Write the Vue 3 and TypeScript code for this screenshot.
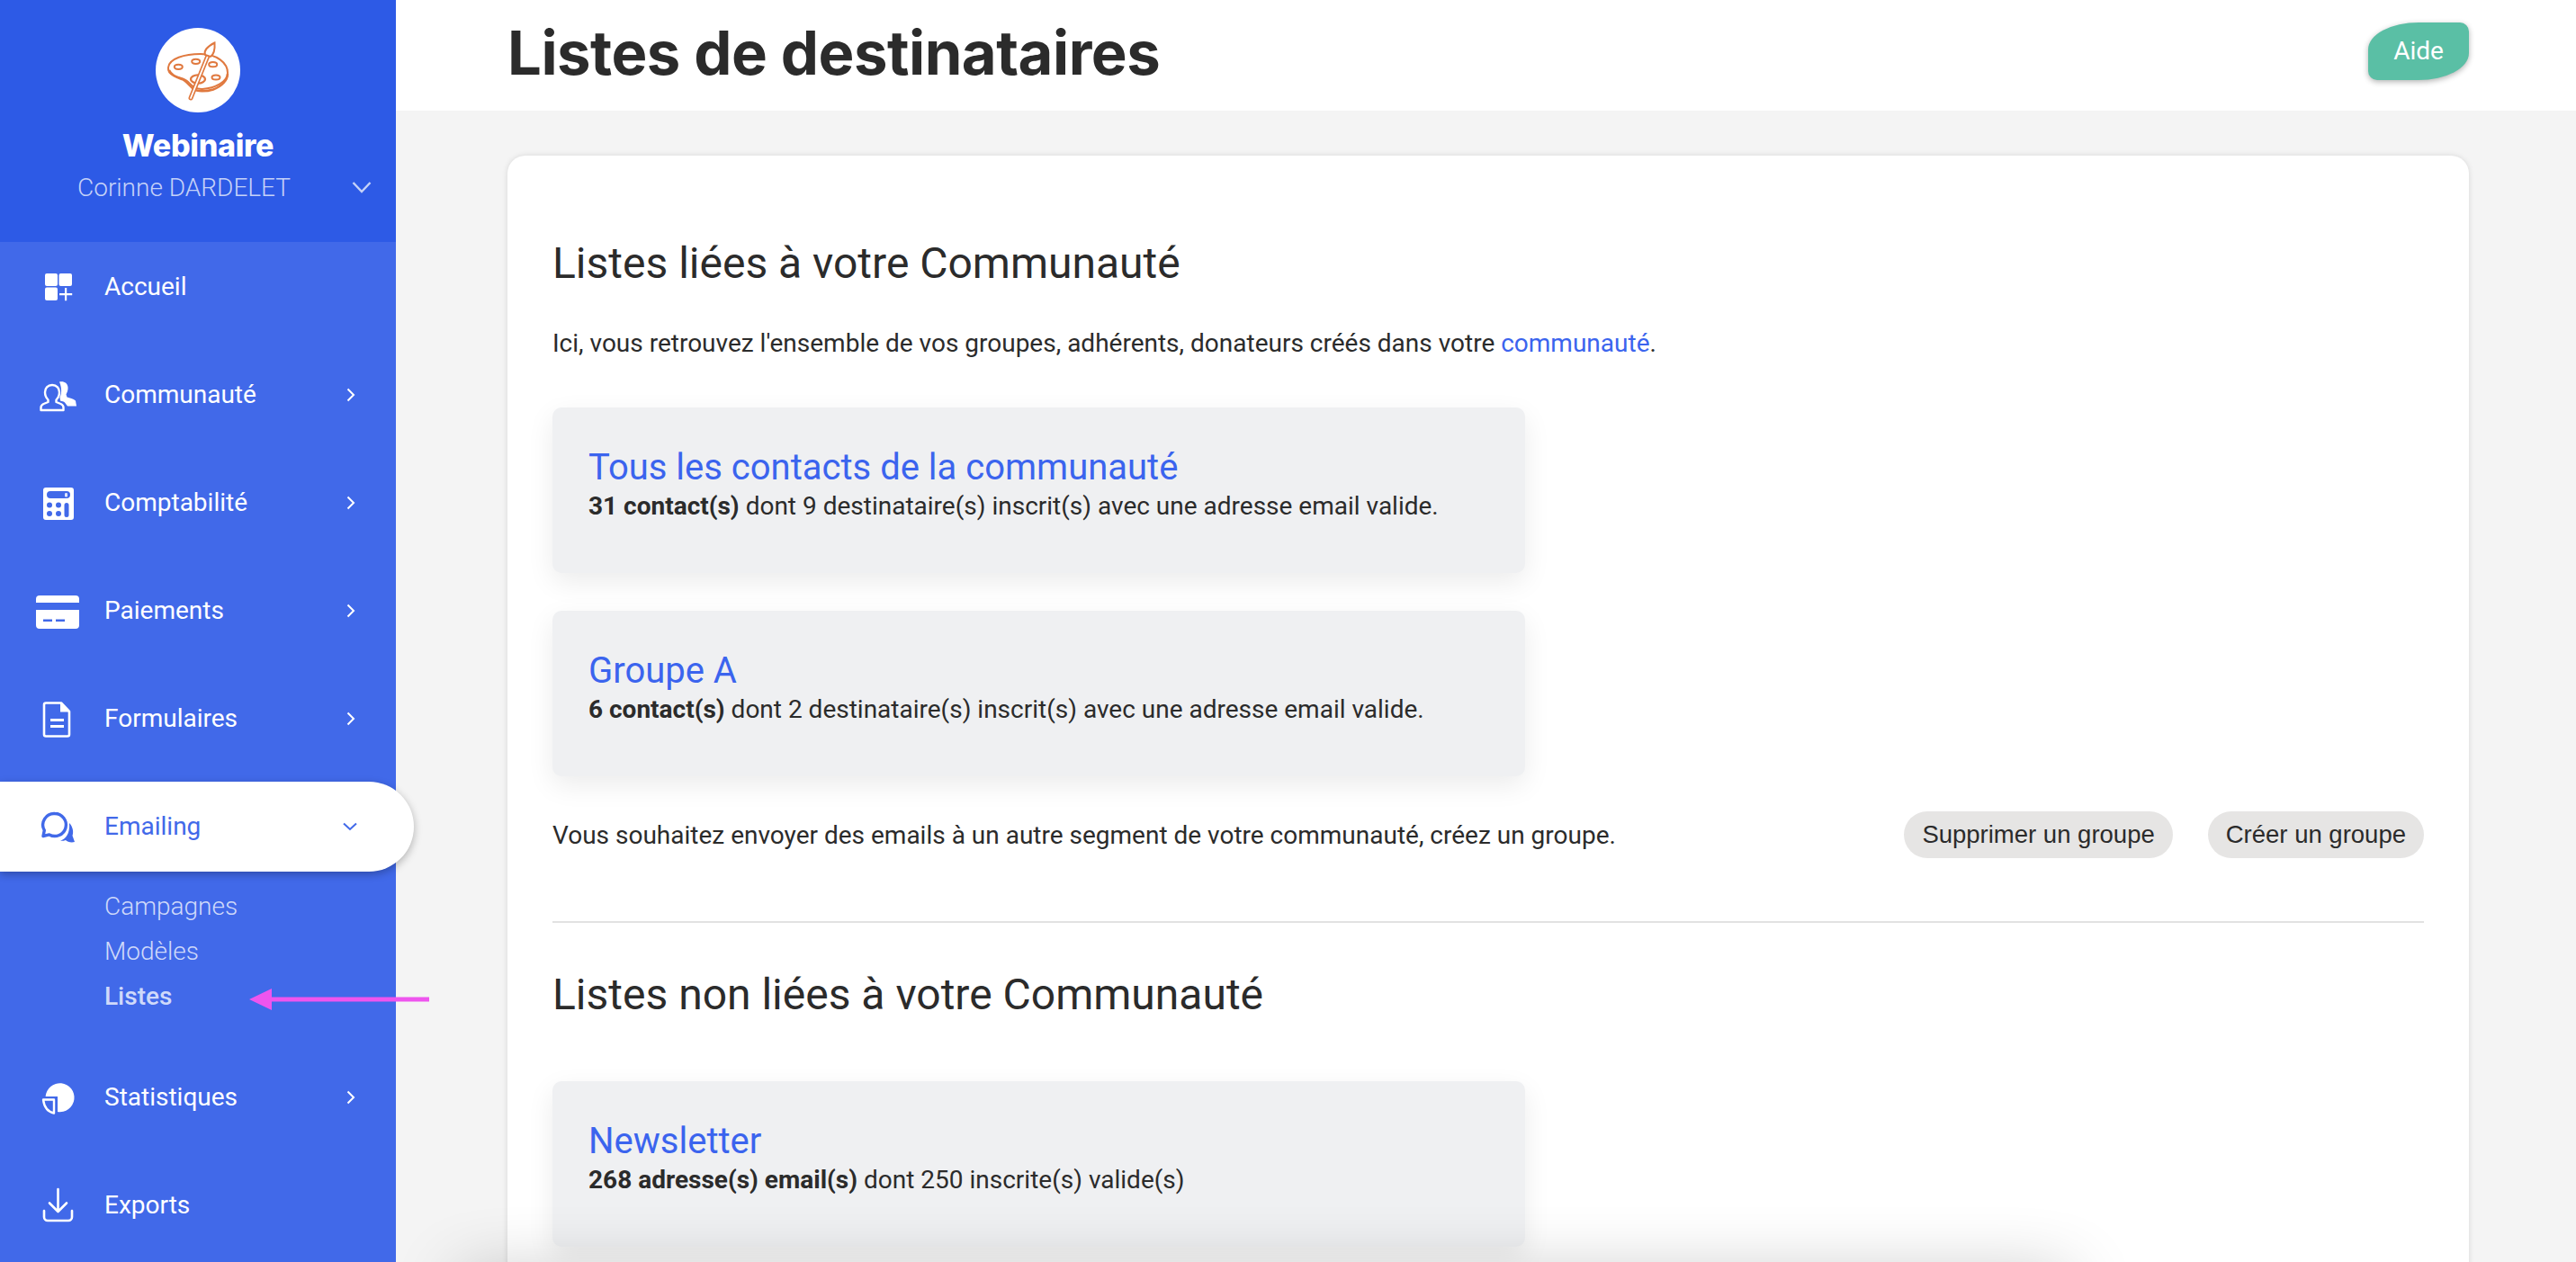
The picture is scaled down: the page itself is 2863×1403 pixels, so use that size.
<script setup lang="ts">
interface NavItem {
  label: string
  icon: string
  more?: boolean
  active?: boolean
}
interface ListCard {
  title: string
  strong: string
  rest: string
}
const items: NavItem[] = [
  { label: 'Accueil', icon: 'home' },
  { label: 'Communauté', icon: 'people', more: true },
  { label: 'Comptabilité', icon: 'calc', more: true },
  { label: 'Paiements', icon: 'card', more: true },
  { label: 'Formulaires', icon: 'doc', more: true },
  { label: 'Emailing', icon: 'chat', active: true },
  { label: 'Statistiques', icon: 'pie', more: true },
  { label: 'Exports', icon: 'export' },
]
const subItems: string[] = ['Campagnes', 'Modèles', 'Listes']
const linked: ListCard[] = [
  { title: 'Tous les contacts de la communauté', strong: '31 contact(s)', rest: ' dont 9 destinataire(s) inscrit(s) avec une adresse email valide.' },
  { title: 'Groupe A', strong: '6 contact(s)', rest: ' dont 2 destinataire(s) inscrit(s) avec une adresse email valide.' },
]
</script>

<template>
  <div class="page">
    <aside class="sidebar">
      <div class="brand">
        <div class="logo">
          <svg width="94" height="94" viewBox="0 0 94 94" fill="none" stroke="#e0793f" stroke-width="2">
            <path d="M14 44C15 34 32 29 50 29C68 29 80 39 80 50C80 60 66 67 52 68C44 68.500 40 64 36 60C32 56 26 56 20 53C16 51 13.500 48 14 44Z" />
            <path d="M15 47C17 52 23 55 29 57C34 59 37 64 42 68C46 71 56 71 64 68.500C74 65 80 58 80 51" stroke-width="2.400" />
            <ellipse cx="25.300" cy="43.300" rx="4.500" ry="2.600" />
            <ellipse cx="44.700" cy="37.300" rx="4.500" ry="2.600" />
            <ellipse cx="63.700" cy="40.700" rx="4.500" ry="2.600" />
            <ellipse cx="67" cy="55" rx="4.500" ry="2.600" />
            <ellipse cx="47" cy="57" rx="8" ry="4.600" stroke-width="2.400" />
            <line x1="39" y1="78" x2="58" y2="31" stroke-width="5" stroke-linecap="round" />
            <line x1="39" y1="78" x2="58" y2="31" stroke="#fff" stroke-width="1.800" stroke-linecap="round" />
            <path d="M55 30C53.500 26 57 21 65.500 16.500C66 23 65 29 61 32Z" fill="#fff" />
          </svg>
        </div>
        <div class="brand-name">Webinaire</div>
        <div class="brand-user">
          <span>Corinne DARDELET</span>
          <svg class="user-chev" width="22" height="14" viewBox="0 0 22 14" fill="none" stroke="#c5d2f8" stroke-width="2.400">
            <path d="M1.500 2L11 12L20.500 2" />
          </svg>
        </div>
      </div>
      <nav class="menu">
        <template v-for="item in items" :key="item.label">
          <a class="item" :class="{ active: item.active }">
            <svg class="icon" width="48" height="44" viewBox="0 0 48 44">
              <g v-if="item.icon === 'home'" fill="#fff">
                <rect x="10" y="7" width="14" height="14" rx="2" />
                <rect x="25.500" y="7" width="14.500" height="14" rx="2" />
                <rect x="10" y="22.500" width="14" height="14.500" rx="2" />
                <path d="M26 29h6V23h2.200v6h6v2.200h-6v6H32v-6h-6z" />
              </g>
              <g v-else-if="item.icon === 'people'">
                <path d="M26 7.500c5-1 9 1 9.500 6 .3 3-1 6-2 8l1 3c3 1 7 1.500 9.500 4l1 6H35l-3-4c-1-1-3-1.500-5-2l-.5-4c2-3 2.500-10-.5-17z" fill="#fff" />
                <path d="M18 11c-5 0-8 3.500-8 8 0 4 1.500 6.500 3.500 8.500v2.500l-5 2c-2 1-3 2-3 4v3h25v-3c0-2-1-3-3-4l-5-2v-2.500c2-2 3.500-4.500 3.500-8.500 0-4.500-3-8-8-8z" fill="#4169e9" stroke="#fff" stroke-width="2.400" stroke-linejoin="round" />
              </g>
              <g v-else-if="item.icon === 'calc'">
                <path fill="#fff" fill-rule="evenodd" d="M11 5h28a3 3 0 0 1 3 3v30a3 3 0 0 1-3 3H11a3 3 0 0 1-3-3V8a3 3 0 0 1 3-3zM16 9a4 4 0 0 0 0 8h18a4 4 0 0 0 0-8zM34 22a2.500 2.500 0 0 0-2.500 2.500v11a2.500 2.500 0 0 0 5 0v-11A2.500 2.500 0 0 0 34 22z" />
                <g fill="#4169e9">
                  <circle cx="15" cy="24.500" r="3" />
                  <circle cx="25" cy="24.500" r="3" />
                  <circle cx="15" cy="34" r="3" />
                  <circle cx="25" cy="34" r="3" />
                </g>
                <rect x="32" y="11" width="3" height="4.500" rx="1.200" fill="#dfe6fc" />
              </g>
              <g v-else-if="item.icon === 'card'" fill="#fff">
                <path d="M4 5h40a4 4 0 0 1 4 4v4H0V9a4 4 0 0 1 4-4z" />
                <path fill-rule="evenodd" d="M0 21h48v17a4 4 0 0 1-4 4H4a4 4 0 0 1-4-4zM8 31.500V34h10v-2.500zM22 31.500V34h10v-2.500z" />
              </g>
              <g v-else-if="item.icon === 'doc'">
                <path d="M11 4.500H28L37 14V39.500a2 2 0 0 1-2 2H11a2 2 0 0 1-2-2V6.500a2 2 0 0 1 2-2z" fill="none" stroke="#fff" stroke-width="2.600" stroke-linejoin="round" />
                <path d="M27 4.500L37.500 14.500H27z" fill="#fff" />
                <path d="M16 23.500H31M16 30.500H31" stroke="#fff" stroke-width="3" fill="none" />
              </g>
              <g v-else-if="item.icon === 'chat'">
                <path d="M21 7.500a12.500 12.500 0 1 1-6.200 23.400L8 32.500l1.300-6.400A12.500 12.500 0 0 1 21 7.500z" fill="none" stroke="#4169e9" stroke-width="3.400" stroke-linejoin="round" />
                <path d="M37 18c4 4 5 10 3.500 14l2.500 7c-4 1-8 0-10-2-2 .8-4 1-6 .8 6-2 11-8 10-19.800z" fill="#4169e9" />
              </g>
              <g v-else-if="item.icon === 'pie'">
                <path d="M10.600 21H24V38A16 16 0 1 0 10.600 21Z" fill="#fff" />
                <path d="M8 24.500H20V39.500C13 38 9 32 8 24.500Z" fill="none" stroke="#fff" stroke-width="2.400" stroke-linejoin="round" />
              </g>
              <g v-else fill="none" stroke="#fff" stroke-width="2.600" stroke-linecap="round" stroke-linejoin="round">
                <path d="M24.500 4V28M15 19.500L24.500 29L34 19.500" />
                <path d="M9 28v7a4 4 0 0 0 4 4h23a4 4 0 0 0 4-4v-7" />
              </g>
            </svg>
            <span class="label">{{ item.label }}</span>
            <svg v-if="item.more" class="chev" width="10" height="16" viewBox="0 0 10 16" fill="none" stroke="#fff" stroke-width="2">
              <path d="M1.500 1.500L8 8L1.500 14.500" />
            </svg>
            <svg v-if="item.active" class="chev-down" width="16" height="10" viewBox="0 0 16 10" fill="none" stroke="#4169e9" stroke-width="2">
              <path d="M1 1.500L8 8L15 1.500" />
            </svg>
          </a>
          <ul v-if="item.active" class="sub">
            <li v-for="s in subItems" :key="s" :class="{ current: s === 'Listes' }">{{ s }}</li>
          </ul>
        </template>
      </nav>
    </aside>

    <main class="main">
      <header class="topbar">
        <h1>Listes de destinataires</h1>
        <button class="help">Aide</button>
      </header>
      <div class="content">
        <section class="panel">
          <h2>Listes liées à votre Communauté</h2>
          <p class="intro">Ici, vous retrouvez l'ensemble de vos groupes, adhérents, donateurs créés dans votre <a>communauté</a>.</p>
          <article v-for="c in linked" :key="c.title" class="list-card">
            <h3>{{ c.title }}</h3>
            <p><strong>{{ c.strong }}</strong>{{ c.rest }}</p>
          </article>
          <div class="actions">
            <span>Vous souhaitez envoyer des emails à un autre segment de votre communauté, créez un groupe.</span>
            <div class="buttons">
              <button class="pill">Supprimer un groupe</button>
              <button class="pill">Créer un groupe</button>
            </div>
          </div>
          <hr />
          <h2>Listes non liées à votre Communauté</h2>
          <article class="list-card newsletter">
            <h3>Newsletter</h3>
            <p><strong>268 adresse(s) email(s)</strong> dont 250 inscrite(s) valide(s)</p>
          </article>
        </section>
      </div>
    </main>

    <div class="below"></div>
    <svg class="arrow" width="200" height="24" viewBox="0 0 200 24">
      <path d="M0 12L25 0V9.500H200V14.500H25V24Z" fill="#ee55ee" />
    </svg>
  </div>
</template>

<style scoped>
.page {
  position: relative;
  display: grid;
  grid-template-columns: 440px 1fr;
  width: 2863px;
  height: 1403px;
  overflow: hidden;
  background: #111;
  font-family: Roboto, "Liberation Sans", sans-serif;
  color: #2b2b2b;
}
.sidebar {
  background: #4169e9;
  border-bottom-left-radius: 8px;
  display: flex;
  flex-direction: column;
}
.brand {
  height: 269px;
  box-sizing: border-box;
  padding-top: 31px;
  background: #2d5ae6;
  display: flex;
  flex-direction: column;
  align-items: center;
  color: #fff;
}
.logo {
  width: 94px;
  height: 94px;
  border-radius: 50%;
  background: #fff;
}
.brand-name {
  margin-top: 15px;
  font-family: Inter, "Open Sans", sans-serif;
  font-size: 34px;
  line-height: 44px;
  font-weight: 800;
  letter-spacing: -0.3px;
}
.brand-user {
  position: relative;
  width: 100%;
  margin-top: 7px;
  box-sizing: border-box;
  padding-left: 86px;
  font-size: 28px;
  line-height: 36px;
  font-weight: 300;
  color: #c5d2f8;
}
.user-chev {
  position: absolute;
  left: 391px;
  top: 10px;
}
.menu {
  display: flex;
  flex-direction: column;
  gap: 20px;
}
.item {
  position: relative;
  height: 100px;
  display: flex;
  align-items: center;
  padding-left: 40px;
  color: #fff;
  font-size: 28px;
  font-weight: 400;
}
.item.active {
  width: 460px;
  box-sizing: border-box;
  background: #fff;
  color: #4169e9;
  border-radius: 0 50px 50px 0;
  box-shadow: 0 3px 10px rgba(0, 0, 0, 0.28);
  z-index: 2;
}
.icon {
  flex: none;
  margin-right: 28px;
}
.label {
  flex: 1;
  margin-top: -2px;
}
.chev {
  position: absolute;
  left: 385px;
  top: 42px;
}
.chev-down {
  position: absolute;
  left: 381px;
  top: 45px;
}
.sub {
  list-style: none;
  margin: -6px 0 0;
  padding: 0 0 17px 116px;
  color: #cfd9fa;
  font-size: 28px;
  font-weight: 300;
  line-height: 50px;
}
.sub .current {
  font-weight: 500;
}
.main {
  min-width: 0;
  background: #f4f4f4;
}
.topbar {
  height: 123px;
  box-sizing: border-box;
  padding: 0 119px 0 124px;
  background: #fff;
  display: flex;
  justify-content: space-between;
  align-items: center;
}
h1 {
  margin: -6px 0 0;
  font-family: Inter, "Open Sans", sans-serif;
  font-size: 67px;
  font-weight: 700;
  line-height: 116px;
  color: #2b2b2b;
  letter-spacing: -0.5px;
}
.help {
  width: 112px;
  height: 64px;
  margin-top: -9px;
  border: none;
  padding: 0 0 2px;
  background: #5abfa5;
  color: #fff;
  font-family: Roboto, sans-serif;
  font-size: 28px;
  font-weight: 400;
  border-radius: 56px 10px 56px 10px / 30px 10px 30px 10px;
  box-shadow: 0 2px 6px rgba(0, 0, 0, 0.3);
}
.content {
  padding: 50px 119px 0 124px;
}
.panel {
  background: #fff;
  border-radius: 20px;
  padding: 90px 50px 0;
  height: 1400px;
  box-shadow: 0 0 6px rgba(0, 0, 0, 0.12);
}
h2 {
  margin: 0;
  font-size: 48px;
  font-weight: 400;
  line-height: 60px;
  color: #2b2b2b;
}
.intro {
  margin: 39px 0 51px;
  font-size: 28px;
  line-height: 40px;
}
.intro a {
  color: #3b64ee;
}
.list-card {
  width: 1081px;
  height: 184px;
  box-sizing: border-box;
  margin-bottom: 42px;
  padding: 45px 40px 0;
  background: #eff0f2;
  border-radius: 10px;
  box-shadow: 0 10px 30px rgba(0, 0, 0, 0.08);
}
h3 {
  margin: 0 0 1px;
  font-size: 40px;
  font-weight: 400;
  line-height: 44px;
  color: #3b64ee;
}
.list-card p {
  margin: 0;
  font-size: 28px;
  line-height: 40px;
}
.actions {
  height: 52px;
  margin-top: -3px;
  display: flex;
  align-items: center;
  justify-content: space-between;
  font-size: 28px;
}
.buttons {
  display: flex;
  gap: 39px;
}
.pill {
  height: 52px;
  padding: 0 20px;
  border: none;
  border-radius: 26px;
  background: #e6e5e4;
  color: #2b2b2b;
  font-family: "Liberation Sans", sans-serif;
  font-size: 27.500px;
}
hr {
  margin: 70px 0 50px;
  height: 2px;
  border: none;
  background: #e2e2e2;
}
.newsletter {
  margin-top: 66px;
}
.below {
  position: absolute;
  left: 510px;
  top: 1420px;
  width: 1790px;
  height: 40px;
  border-radius: 10px;
  background: #fff;
  box-shadow: 0 0 75px rgba(0, 0, 0, 0.3);
}
.arrow {
  position: absolute;
  left: 277px;
  top: 1099px;
  z-index: 3;
}
</style>
